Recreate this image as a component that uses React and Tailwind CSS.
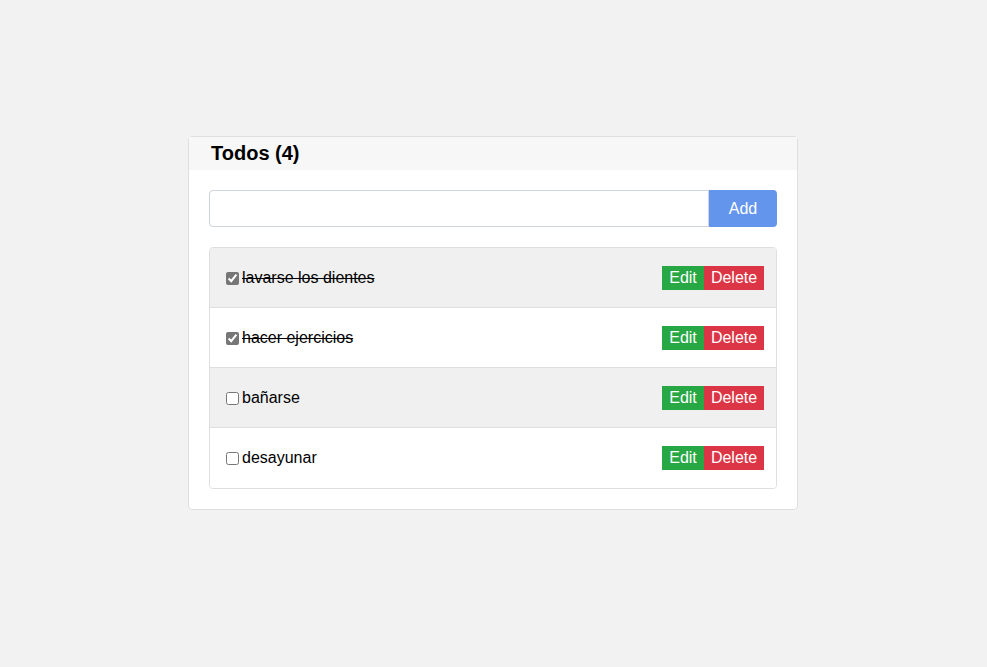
import React from "react";

const todos = [
  { text: "lavarse los dientes", done: true },
  { text: "hacer ejercicios", done: true },
  { text: "bañarse", done: false },
  { text: "desayunar", done: false },
];

export default function App() {
  return (
    <div className="min-h-[667px] w-full bg-[#f2f2f2] pt-[136px] font-['Liberation_Sans',Arial,sans-serif] text-black">
      <div className="ml-[188px] w-[610px] rounded-[4px] border border-[#dfdfdf] bg-white">
        <div className="flex h-[33px] items-center bg-[#f7f7f7] pb-[2px] pl-[22px]">
          <h1 className="text-[20px] font-bold leading-none">Todos (4)</h1>
        </div>
        <div className="px-[20px] pb-[20px] pt-[20px]">
          <div className="flex h-[37px]">
            <input
              type="text"
              className="h-full flex-1 rounded-l-[4px] border border-[#ced4da] bg-white px-3 text-[16px] outline-none"
            />
            <button className="h-full w-[68px] rounded-r-[4px] bg-[#6495ed] text-[16px] text-white">
              Add
            </button>
          </div>
          <ul className="mt-[20px] overflow-hidden rounded-[4px] border border-[#dfdfdf]">
            {todos.map((t, i) => (
              <li
                key={i}
                className={`flex h-[60px] items-center justify-between px-[12px] ${
                  i % 2 === 0 ? "bg-[#f0f0f0]" : "bg-white"
                } ${i < todos.length - 1 ? "border-b border-[#dfdfdf] pt-[1px]" : ""}`}
              >
                <label className="flex items-center text-[16px]">
                  <input
                    type="checkbox"
                    defaultChecked={t.done}
                    className="ml-[4px] mr-[3px] h-[13px] w-[13px] accent-[#767676]"
                  />
                  <span className={t.done ? "line-through" : ""}>{t.text}</span>
                </label>
                <div className="flex h-[24px]">
                  <button className="h-full w-[42px] bg-[#28a745] text-[16px] text-white">
                    Edit
                  </button>
                  <button className="h-full w-[60px] bg-[#dc3545] text-[16px] text-white">
                    Delete
                  </button>
                </div>
              </li>
            ))}
          </ul>
        </div>
      </div>
    </div>
  );
}
